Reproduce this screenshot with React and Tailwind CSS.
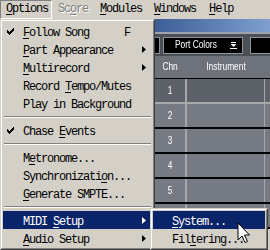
import React from "react";

const mono = "font-['Liberation_Mono',monospace] text-[12px] tracking-[-1.2px]";
const narrow = "inline-block whitespace-nowrap font-['Liberation_Sans',sans-serif] text-[11px] leading-none tracking-normal scale-x-[0.76]";

function Label({ text, u }) {
  if (u < 0) return <span className="relative top-[2px] whitespace-pre">{text}</span>;
  return (
    <span className="relative top-[2px] whitespace-pre">
      {text.slice(0, u)}
      <span className="underline underline-offset-[2px]">{text.slice(u, u + 1)}</span>
      {text.slice(u + 1)}
    </span>
  );
}

function Check() {
  return (
    <svg width="7" height="7" viewBox="0 0 7 7" className="block">
      <path d="M6 0h1v3h-1zM5 1h1v3h-1zM4 2h1v3h-1zM3 3h1v3h-1zM2 4h1v3h-1zM1 3h1v3h-1zM0 2h1v3h-1z" fill="#000" />
    </svg>
  );
}

function Arrow({ color = "#000" }) {
  return (
    <svg width="4" height="7" viewBox="0 0 4 7" className="block">
      <path d="M0 0L4 3.5L0 7Z" fill={color} />
    </svg>
  );
}

function Item({ text, u, check, arrow, active, shortcut, sub }) {
  return (
    <div className={`flex h-[18px] items-center leading-[18px] ${active ? "bg-[#0a246a] text-white" : "text-black"}`}>
      <div className={`flex h-full ${sub ? "w-[19px]" : "w-[20px]"} shrink-0 items-center pl-[4px]`}>
        {check && <Check />}
      </div>
      <div className="flex-1">
        <Label text={text} u={u} />
      </div>
      {shortcut && (
        <div className="w-[18px]">
          <Label text={shortcut} u={-1} />
        </div>
      )}
      <div className="flex w-[10px] shrink-0 items-center">
        {arrow && <Arrow color={active ? "#fff" : "#000"} />}
      </div>
    </div>
  );
}

function Sep() {
  return (
    <div className="flex h-[9px] flex-col justify-center px-[1px]">
      <div className="h-[1px] bg-[#808080]" />
      <div className="h-[1px] bg-white" />
    </div>
  );
}

function MenuFrame({ children, className }) {
  return (
    <div className={`border-[1px] border-t-[#d4d0c8] border-l-[#d4d0c8] border-r-[#404040] border-b-[#404040] bg-[#d4d0c8] ${className}`}>
      <div className="border-[1px] border-t-white border-l-white border-r-[#808080] border-b-[#808080] p-[1px]">
        {children}
      </div>
    </div>
  );
}

function Cursor() {
  return (
    <svg width="14" height="22" viewBox="0 0 14 22" className="absolute left-[237px] top-[222px]">
      <path d="M1 1L1 18L5 14L8 20.5L10.5 19.5L7.5 13L12.5 13Z" fill="#fff" stroke="#000" strokeWidth="1" />
    </svg>
  );
}

function DropIcon() {
  return (
    <svg width="7" height="7" viewBox="0 0 7 7" className="block">
      <path d="M1 0h5v1h-5z" fill="#fff" />
      <path d="M0.5 2L6.5 2L3.5 5Z" fill="#fff" />
      <path d="M0 6h7v1h-7z" fill="#fff" />
    </svg>
  );
}

function Row({ n, dark, line }) {
  return (
    <div className="flex h-[25px] shrink-0 flex-col overflow-hidden">
      <div className={`flex h-[23px] shrink-0 ${dark ? "bg-[#5d6168]" : "bg-[#767b83]"}`}>
        <div className="flex w-[30px] items-center justify-center text-white">
          <span className={narrow}>{n}</span>
        </div>
        <div className="w-[2px] bg-[#a3a7ac]" />
        <div className="w-[77px]" />
        <div className="w-[1px] bg-[#a3a7ac]" />
        <div className="flex-1" />
      </div>
      <div className={`h-[2px] shrink-0 ${line}`} />
    </div>
  );
}

export default function App() {
  return (
    <div className={`relative h-[250px] w-[270px] overflow-hidden bg-[#d4d0c8] ${mono}`}>
      {/* Menu bar */}
      <div className="flex h-[19px] shrink-0 items-center overflow-hidden bg-[#d4d0c8] leading-[19px]">
        <div className="h-[19px] w-[52px] border-[1px] border-t-[#808080] border-l-[#808080] border-r-white border-b-white pl-[5px]">
          <span className="relative -top-[1px]">
            <span className="underline underline-offset-[2px]">O</span>ptions
          </span>
        </div>
        <div className="ml-[6px] text-[#808080] [text-shadow:1px_1px_0_#fff]">
          Sc<span className="underline underline-offset-[2px]">o</span>re
        </div>
        <div className="ml-[12px]">
          <span className="underline underline-offset-[2px]">M</span>odules
        </div>
        <div className="ml-[12px]">
          <span className="underline underline-offset-[2px]">W</span>indows
        </div>
        <div className="ml-[13px]">
          <span className="underline underline-offset-[2px]">H</span>elp
        </div>
      </div>

      {/* Application window (behind menus) */}
      <div className="flex h-[231px] flex-col overflow-hidden pl-[155px] leading-none">
        <div className="h-[13px] shrink-0 bg-gradient-to-r from-[#3d5e96] to-[#809fd0]" />
        <div className="h-[2px] shrink-0 bg-[#9da3ab]" />
        <div className="flex h-[22px] shrink-0 items-center overflow-hidden bg-[#4b4f56]">
          <div className="h-[17px] w-[5px] border-[1px] border-l-0 border-[#8e9296] bg-black" />
          <div className="ml-[3px] flex h-[17px] w-[80px] items-center border-[1px] border-[#8e9296] bg-black pl-[11px] pr-[5px]">
            <div className="flex-1 overflow-hidden whitespace-nowrap text-white">
              <span className={`${narrow} origin-left`}>Port Colors</span>
            </div>
            <DropIcon />
          </div>
          <div className="ml-[7px] h-[17px] flex-1 border-[1px] border-r-0 border-[#8e9296] bg-black" />
        </div>
        <div className="flex h-[22px] shrink-0 items-center overflow-hidden bg-[#6e737b] text-white">
          <div className="w-[32px] pr-[2px] text-center">
            <span className={narrow}>Chn</span>
          </div>
          <div className="w-[78px] text-center">
            <span className={narrow}>Instrument</span>
          </div>
        </div>
        <div className="h-[1px] shrink-0 bg-black" />
        <Row n="1" dark line="bg-[#a9a9a9]" />
        <Row n="2" line="bg-black" />
        <Row n="3" line="bg-black" />
        <Row n="4" line="bg-black" />
        <Row n="5" line="bg-black" />
        <Row n="6" line="bg-black" />
      </div>

      {/* Options dropdown */}
      <MenuFrame className="absolute left-0 top-[19px] w-[155px]">
        <Item text="Follow Song" u={0} check shortcut="F" />
        <Item text="Part Appearance" u={0} arrow />
        <Item text="Multirecord" u={0} arrow />
        <Item text="Record Tempo/Mutes" u={7} />
        <Item text="Play in Background" u={-1} />
        <Sep />
        <Item text="Chase Events" u={6} check />
        <Sep />
        <Item text="Metronome..." u={1} />
        <Item text="Synchronization..." u={13} />
        <Item text="Generate SMPTE..." u={0} />
        <Sep />
        <Item text="MIDI Setup" u={5} arrow active />
        <Item text="Audio Setup" u={0} arrow />
      </MenuFrame>

      {/* MIDI Setup submenu */}
      <MenuFrame className="absolute left-[150px] top-[208px] w-[118px]">
        <Item text="System..." u={0} active sub />
        <Item text="Filtering..." u={3} sub />
      </MenuFrame>

      <Cursor />
    </div>
  );
}
